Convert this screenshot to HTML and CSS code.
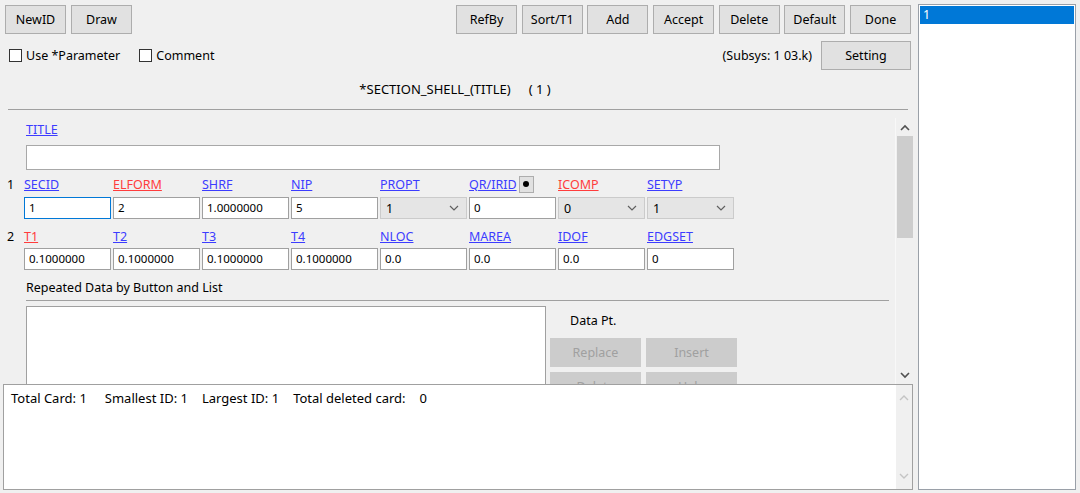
FILE: index.html
```html
<!DOCTYPE html>
<html lang="en">
<head>
    <meta charset="UTF-8">
    <meta name="viewport" content="width=device-width, initial-scale=1.0">
    <title>*SECTION_SHELL_(TITLE)</title>
    <link rel="stylesheet" href="styles.css">
</head>
<body>
    <div class="app">
        <div class="main">
            <div class="toolbar">
                <div class="group">
                    <button class="btn">NewID</button>
                    <button class="btn">Draw</button>
                </div>
                <div class="group">
                    <button class="btn">RefBy</button>
                    <button class="btn">Sort/T1</button>
                    <button class="btn">Add</button>
                    <button class="btn">Accept</button>
                    <button class="btn">Delete</button>
                    <button class="btn">Default</button>
                    <button class="btn">Done</button>
                </div>
            </div>
            <div class="options">
                <div class="checks">
                    <label class="check"><span class="box"></span>Use *Parameter</label>
                    <label class="check"><span class="box"></span>Comment</label>
                </div>
                <div class="subsys">
                    <span>(Subsys: 1 03.k)</span>
                    <button class="btn wide">Setting</button>
                </div>
            </div>
            <div class="heading">*SECTION_SHELL_(TITLE)<span class="count">( 1 )</span></div>
            <div class="rule"></div>
            <div class="pane">
                <div class="form">
                    <div class="title-label"><a class="field">TITLE</a></div>
                    <div class="title-input"></div>

                    <div class="labels">
                        <span class="rownum">1</span>
                        <a class="field">SECID</a>
                        <a class="field req">ELFORM</a>
                        <a class="field">SHRF</a>
                        <a class="field">NIP</a>
                        <a class="field">PROPT</a>
                        <span class="with-btn"><a class="field">QR/IRID</a><span class="dot-btn"><span class="dot"></span></span></span>
                        <a class="field req">ICOMP</a>
                        <a class="field">SETYP</a>
                    </div>
                    <div class="inputs">
                        <div class="input focus">1</div>
                        <div class="input">2</div>
                        <div class="input">1.0000000</div>
                        <div class="input">5</div>
                        <div class="combo"><span>1</span><svg width="10" height="6" viewBox="0 0 10 6"><path d="M1 1l4 4 4-4" fill="none" stroke="#606060" stroke-width="1.2"/></svg></div>
                        <div class="input">0</div>
                        <div class="combo"><span>0</span><svg width="10" height="6" viewBox="0 0 10 6"><path d="M1 1l4 4 4-4" fill="none" stroke="#606060" stroke-width="1.2"/></svg></div>
                        <div class="combo"><span>1</span><svg width="10" height="6" viewBox="0 0 10 6"><path d="M1 1l4 4 4-4" fill="none" stroke="#606060" stroke-width="1.2"/></svg></div>
                    </div>

                    <div class="labels second">
                        <span class="rownum">2</span>
                        <a class="field req">T1</a>
                        <a class="field">T2</a>
                        <a class="field">T3</a>
                        <a class="field">T4</a>
                        <a class="field">NLOC</a>
                        <a class="field">MAREA</a>
                        <a class="field">IDOF</a>
                        <a class="field">EDGSET</a>
                    </div>
                    <div class="inputs">
                        <div class="input">0.1000000</div>
                        <div class="input">0.1000000</div>
                        <div class="input">0.1000000</div>
                        <div class="input">0.1000000</div>
                        <div class="input">0.0</div>
                        <div class="input">0.0</div>
                        <div class="input">0.0</div>
                        <div class="input">0</div>
                    </div>

                    <div class="repeat-title">Repeated Data by Button and List</div>
                    <div class="repeat-rule"></div>
                    <div class="repeat">
                        <div class="listbox"></div>
                        <div class="data-pt">
                            <div class="data-label">Data Pt.</div>
                            <div class="pt-buttons">
                                <button class="btn off">Replace</button>
                                <button class="btn off">Insert</button>
                                <button class="btn off">Delete</button>
                                <button class="btn off">Help</button>
                            </div>
                        </div>
                    </div>
                </div>
                <div class="vscroll">
                    <svg class="arrow" width="10" height="7" viewBox="0 0 10 7"><path d="M1 6l4-4 4 4" fill="none" stroke="#505050" stroke-width="1.6"/></svg>
                    <div class="thumb"></div>
                    <div class="track"></div>
                    <svg class="arrow" width="10" height="7" viewBox="0 0 10 7"><path d="M1 1l4 4 4-4" fill="none" stroke="#505050" stroke-width="1.6"/></svg>
                </div>
            </div>
            <div class="info">
                <div class="info-text">
                    <span>Total Card: 1</span><span class="gap-l">Smallest ID: 1</span><span class="gap">Largest ID: 1</span><span class="gap-r">Total deleted card:</span><span class="zero">0</span>
                </div>
                <div class="info-scroll">
                    <svg width="10" height="7" viewBox="0 0 10 7"><path d="M1 6l4-4 4 4" fill="none" stroke="#c4c4c4" stroke-width="1.4"/></svg>
                    <svg width="10" height="7" viewBox="0 0 10 7"><path d="M1 1l4 4 4-4" fill="none" stroke="#c4c4c4" stroke-width="1.4"/></svg>
                </div>
            </div>
        </div>
        <div class="list">
            <div class="item selected">1</div>
        </div>
    </div>
</body>
</html>
```

FILE: styles.css
```css
body {
    margin: 0;
    background-color: #f0f0f0;
    font-family: "Noto Sans", Arial, sans-serif;
    font-size: 12.5px;
    color: #000;
}
.app {
    display: flex;
    width: 1080px;
    height: 493px;
    overflow: hidden;
}
.main {
    width: 913px;
    display: flex;
    flex-direction: column;
}
.btn {
    font-family: inherit;
    font-size: 12.5px;
    color: #000;
    background-color: #e1e1e1;
    border: 1px solid #adadad;
    width: 61px;
    height: 29px;
    padding: 0;
}
.btn.wide {
    width: 90px;
}
.btn.off {
    width: 91px;
    color: #a0a0a0;
    background-color: #cccccc;
    border-color: #cccccc;
}
.toolbar {
    display: flex;
    justify-content: space-between;
    padding: 5px 2px 0 5px;
}
.group {
    display: flex;
    gap: 4.67px;
}
.group:first-child {
    gap: 5px;
}
.options {
    display: flex;
    justify-content: space-between;
    align-items: center;
    padding: 7px 2px 0 9px;
}
.checks {
    display: flex;
    gap: 19px;
}
.check {
    display: flex;
    align-items: center;
    gap: 4px;
}
.box {
    width: 11px;
    height: 11px;
    border: 1px solid #333;
    background-color: #fff;
}
.subsys {
    display: flex;
    align-items: center;
    gap: 9px;
}
.heading {
    margin-top: 10px;
    line-height: 18px;
    text-align: center;
    font-size: 13px;
    padding-right: 3px;
}
.count {
    margin-left: 18px;
}
.rule {
    margin: 11px 5px 0 8px;
    border-top: 1px solid #a0a0a0;
}
.pane {
    display: flex;
    height: 274px;
    overflow: hidden;
}
.form {
    flex: 1;
    padding-top: 12px;
}
.field {
    color: #3c3cff;
    text-decoration: underline;
}
.field.req {
    color: #ff3c3c;
}
.title-label {
    padding-left: 26px;
    line-height: 16px;
}
.title-input {
    margin: 7px 0 0 26px;
    width: 692px;
    height: 23px;
    background-color: #fff;
    border: 1px solid #a8a8a8;
}
.labels {
    display: grid;
    grid-template-columns: 22px repeat(8, 87px);
    column-gap: 2px;
    margin-top: 5px;
    height: 18px;
    align-items: center;
}
.labels.second {
    margin-top: 8px;
}
.rownum {
    padding-left: 7px;
}
.with-btn {
    display: flex;
    align-items: center;
    gap: 2px;
}
.dot-btn {
    width: 13px;
    height: 15px;
    background-color: #e1e1e1;
    border: 1px solid #adadad;
    display: flex;
    align-items: center;
    justify-content: center;
}
.dot {
    width: 6px;
    height: 6px;
    border-radius: 50%;
    background-color: #000;
}
.inputs {
    display: grid;
    grid-template-columns: repeat(8, 87px);
    column-gap: 2px;
    margin: 4px 0 0 24px;
}
.labels.second + .inputs {
    margin-top: 3px;
}
.input {
    height: 20px;
    line-height: 20px;
    background-color: #fff;
    border: 1px solid #a0a0a0;
    padding-left: 4px;
    font-size: 11.5px;
}
.input.focus {
    border-color: #0078d7;
}
.combo {
    height: 20px;
    background-color: #e5e5e5;
    border: 1px solid #cbcbcb;
    display: flex;
    align-items: center;
    justify-content: space-between;
    padding: 0 7px 0 5px;
}
.repeat-title {
    margin: 10px 0 0 26px;
    line-height: 16px;
}
.repeat-rule {
    margin: 4px 6px 0 26px;
    border-top: 1px solid #a0a0a0;
}
.repeat {
    display: flex;
    margin: 5px 0 0 26px;
}
.listbox {
    width: 518px;
    height: 120px;
    background-color: #fff;
    border: 1px solid #a0a0a0;
}
.data-pt {
    margin-left: 4px;
}
.data-label {
    padding: 6px 0 0 20px;
    line-height: 18px;
}
.pt-buttons {
    display: grid;
    grid-template-columns: 91px 91px;
    gap: 5px 5px;
    margin-top: 8px;
}
.vscroll {
    width: 17px;
    display: flex;
    flex-direction: column;
    align-items: center;
    padding-top: 6px;
    border-left: 1px solid #f8f8f8;
    margin-top: 8px;
}
.vscroll .arrow {
    margin-bottom: 5px;
}
.thumb {
    width: 16px;
    height: 102px;
    margin-left: 1px;
    background-color: #cdcdcd;
}
.track {
    flex: 1;
}
.info {
    display: flex;
    height: 104px;
    margin-left: 3px;
    background-color: #fff;
    border: 1px solid #a0a0a0;
}
.info-text {
    flex: 1;
    padding: 4px 0 0 7px;
    line-height: 18px;
    font-size: 13px;
    white-space: nowrap;
}
.gap-l {
    margin-left: 18px;
}
.gap {
    margin-left: 14px;
}
.gap-r {
    margin-left: 14px;
}
.zero {
    margin-left: 14px;
}
.info-scroll {
    width: 16px;
    background-color: #f0f0f0;
    display: flex;
    flex-direction: column;
    justify-content: space-between;
    align-items: center;
    padding: 9px 0;
}
.list {
    width: 156px;
    height: 484px;
    margin: 4px 0 0 5px;
    background-color: #fff;
    border: 1px solid #9aa0a8;
}
.item {
    height: 18px;
    line-height: 18px;
    padding-left: 3px;
    margin: 1px 1px 0;
}
.item.selected {
    background-color: #0078d7;
    color: #fff;
}
```
